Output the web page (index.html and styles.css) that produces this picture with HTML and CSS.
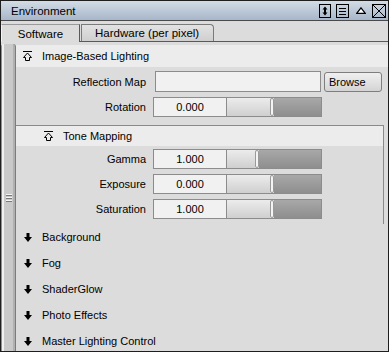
FILE: index.html
```html
<!DOCTYPE html>
<html lang="en">
<head>
  <meta charset="utf-8">
  <title>Environment</title>
  <link rel="stylesheet" href="styles.css">
</head>
<body>
<div class="window">
  <div class="titlebar">
    <span class="title">Environment</span>
    <div class="title-icons">
      <svg class="ticon" width="12" height="14" viewBox="0 0 12 14">
        <rect x="0.5" y="0.5" width="11" height="13" fill="none" stroke="#000"/>
        <path d="M6 2.5 L8.5 5.5 L3.5 5.5 Z M6 11.5 L8.5 8.5 L3.5 8.5 Z" fill="#000"/>
        <rect x="5" y="5" width="2" height="4" fill="#000"/>
      </svg>
      <svg class="ticon" width="13" height="14" viewBox="0 0 13 14">
        <rect x="0.5" y="0.5" width="12" height="13" fill="none" stroke="#000"/>
        <path d="M3 4.5 H10 M3 7.5 H10 M3 10.5 H10" stroke="#000"/>
      </svg>
      <svg class="ticon tri" width="10" height="7" viewBox="0 0 10 7">
        <path d="M5 0.8 L9.3 6.3 L0.7 6.3 Z" fill="#fff" stroke="#000" stroke-width="1.2"/>
      </svg>
      <svg class="ticon" width="14" height="14" viewBox="0 0 14 14">
        <rect x="0.5" y="0.5" width="13" height="13" fill="none" stroke="#000"/>
        <path d="M1 1 L13 13 M13 1 L1 13" stroke="#000"/>
      </svg>
    </div>
  </div>

  <div class="tabs">
    <div class="tab active">Software</div>
    <div class="tab">Hardware (per pixel)</div>
  </div>

  <div class="main">
    <div class="gutter">
      <div class="grip"><i></i><i></i><i></i></div>
    </div>
    <div class="content">
      <div class="sec-head">
        <svg class="open-icon" width="9" height="10" viewBox="0 0 9 10">
          <path d="M0 0.5 H9" stroke="#000"/>
          <path d="M4.5 2 L8.5 6.5 L6.5 6.5 L6.5 9.5 L2.5 9.5 L2.5 6.5 L0.5 6.5 Z" fill="none" stroke="#000"/>
        </svg>
        <span>Image-Based Lighting</span>
      </div>
      <div class="rows top">
        <div class="row first">
          <label class="lbl">Reflection Map</label>
          <div class="field wide"></div>
          <div class="btn">Browse</div>
        </div>
        <div class="row">
          <label class="lbl">Rotation</label>
          <div class="field">0.000</div>
          <div class="slider"><div class="fill" style="width:43px"></div><div class="knob"></div><div class="rest"></div></div>
        </div>
      </div>

      <div class="nested">
        <div class="sec-head sub">
          <svg class="open-icon" width="9" height="10" viewBox="0 0 9 10">
            <path d="M0 0.5 H9" stroke="#000"/>
            <path d="M4.5 2 L8.5 6.5 L6.5 6.5 L6.5 9.5 L2.5 9.5 L2.5 6.5 L0.5 6.5 Z" fill="none" stroke="#000"/>
          </svg>
          <span>Tone Mapping</span>
        </div>
        <div class="rows">
          <div class="row">
            <label class="lbl">Gamma</label>
            <div class="field">1.000</div>
            <div class="slider"><div class="fill" style="width:28px"></div><div class="knob"></div><div class="rest"></div></div>
          </div>
          <div class="row">
            <label class="lbl">Exposure</label>
            <div class="field">0.000</div>
            <div class="slider"><div class="fill" style="width:43px"></div><div class="knob"></div><div class="rest"></div></div>
          </div>
          <div class="row">
            <label class="lbl">Saturation</label>
            <div class="field">1.000</div>
            <div class="slider"><div class="fill" style="width:43px"></div><div class="knob"></div><div class="rest"></div></div>
          </div>
        </div>
      </div>

      <div class="closed-list">
        <div class="closed"><svg class="down" width="8" height="9" viewBox="0 0 8 9"><path d="M2.5 0 H5.5 V4 H8 L4 9 L0 4 H2.5 Z" fill="#000"/></svg><span>Background</span></div>
        <div class="closed"><svg class="down" width="8" height="9" viewBox="0 0 8 9"><path d="M2.5 0 H5.5 V4 H8 L4 9 L0 4 H2.5 Z" fill="#000"/></svg><span>Fog</span></div>
        <div class="closed"><svg class="down" width="8" height="9" viewBox="0 0 8 9"><path d="M2.5 0 H5.5 V4 H8 L4 9 L0 4 H2.5 Z" fill="#000"/></svg><span>ShaderGlow</span></div>
        <div class="closed"><svg class="down" width="8" height="9" viewBox="0 0 8 9"><path d="M2.5 0 H5.5 V4 H8 L4 9 L0 4 H2.5 Z" fill="#000"/></svg><span>Photo Effects</span></div>
        <div class="closed"><svg class="down" width="8" height="9" viewBox="0 0 8 9"><path d="M2.5 0 H5.5 V4 H8 L4 9 L0 4 H2.5 Z" fill="#000"/></svg><span>Master Lighting Control</span></div>
      </div>
    </div>
  </div>
</div>
</body>
</html>
```

FILE: styles.css
```css
html, body {
    margin: 0;
    padding: 0;
}

body {
    font-family: "Liberation Sans", Arial, sans-serif;
    font-size: 11px;
    color: #000;
    background: #dcdcdc;
}

.window {
    width: 389px;
    height: 352px;
    box-sizing: border-box;
    border: 1px solid #1e1e1e;
    background: #dcdcdc;
    display: flex;
    flex-direction: column;
    overflow: hidden;
}

.titlebar {
    height: 19px;
    flex: none;
    display: flex;
    align-items: center;
    justify-content: space-between;
    padding: 0 2px 0 10px;
    background: linear-gradient(#d3dce6, #a7b6c9);
    border-bottom: 1px solid #4a4a4a;
}

.title {
    font-size: 11.5px;
}

.title-icons {
    display: flex;
    align-items: center;
    gap: 5px;
}

.ticon {
    display: block;
}

.ticon.tri {
    margin: 0 1px 0 2px;
}

.tabs {
    height: 20px;
    flex: none;
    display: flex;
    align-items: flex-end;
    border-bottom: 1px solid #5a5a5a;
}

.tab {
    height: 16px;
    line-height: 16px;
    padding: 0 14px 0 13px;
    font-size: 11.5px;
    background: linear-gradient(#e2e2e2, #cfcfcf);
    border: 1px solid #7a7a7a;
    border-bottom: none;
    border-radius: 0 4px 0 0;
    margin-left: 1px;
}

.tab.active {
    width: 79px;
    box-sizing: border-box;
    height: 18px;
    line-height: 18px;
    text-align: center;
    padding: 0;
    margin-left: 0;
    margin-bottom: -1px;
    background: #dcdcdc;
    border-color: #9a9a9a #5a5a5a #5a5a5a #f4f4f4;
    border-radius: 0;
}

.main {
    flex: 1;
    display: flex;
    min-height: 0;
}

.gutter {
    width: 15px;
    flex: none;
    margin-top: 2px;
    box-sizing: border-box;
    border-right: 1px solid #7c7c7c;
    background: linear-gradient(90deg, #8e8e8e 0, #8e8e8e 1px, #f0f0f0 1px, #f0f0f0 3px, #c9c9c9 3px, #c9c9c9 12px, #b0b0b0 12px);
    border-radius: 3px 3px 0 0;
    display: flex;
    align-items: center;
    justify-content: center;
}

.grip {
    display: flex;
    flex-direction: column;
    gap: 1px;
    margin-left: 2px;
}

.grip i {
    display: block;
    width: 6px;
    height: 1px;
    background: #7a7a7a;
    border-top: 1px solid #f4f4f4;
}

.content {
    flex: 1;
    padding-top: 3px;
    min-width: 0;
}

.sec-head {
    height: 22px;
    display: flex;
    align-items: center;
    gap: 10px;
    padding-left: 7px;
    background: #ececec;
}

.sec-head.sub {
    padding-left: 28px;
    height: 20px;
}

.open-icon {
    display: block;
}

.rows {
    display: flex;
    flex-direction: column;
    gap: 5px;
    padding: 3px 0 5px;
}

.rows.top {
    padding: 4px 0 8px;
}

.row {
    display: flex;
    align-items: center;
    height: 20px;
}

.row.first {
    height: 21px;
}

.lbl {
    width: 130px;
    text-align: right;
    margin-right: 7px;
}

.field {
    width: 74px;
    height: 20px;
    box-sizing: border-box;
    border: 1px solid #8c8c8c;
    background: #f1f1f1;
    text-align: center;
    line-height: 18px;
}

.field.wide {
    width: 166px;
    height: 21px;
    margin-left: 2px;
}

.btn {
    width: 58px;
    height: 20px;
    box-sizing: border-box;
    margin-left: 3px;
    padding-left: 4px;
    line-height: 18px;
    border: 1px solid #7e7e7e;
    border-radius: 3px;
    background: linear-gradient(#f0f0f0, #d4d4d4);
}

.slider {
    width: 95px;
    height: 20px;
    box-sizing: border-box;
    display: flex;
    border: 1px solid #8c8c8c;
    border-left: none;
}

.fill {
    background: linear-gradient(#ececec, #cfcfcf);
}

.knob {
    width: 4px;
    box-sizing: border-box;
    border: 1px solid #9a9a9a;
    border-radius: 2px;
    background: #f4f4f4;
}

.rest {
    flex: 1;
    background: linear-gradient(#a8a8a8, #8e8e8e);
}

.nested {
    border-top: 1px solid #8a8a8a;
    border-right: 1px solid #8a8a8a;
    margin-right: 4px;
}

.closed {
    height: 26px;
    display: flex;
    align-items: center;
    gap: 10px;
    padding-left: 8px;
}

.down {
    display: block;
}
```
